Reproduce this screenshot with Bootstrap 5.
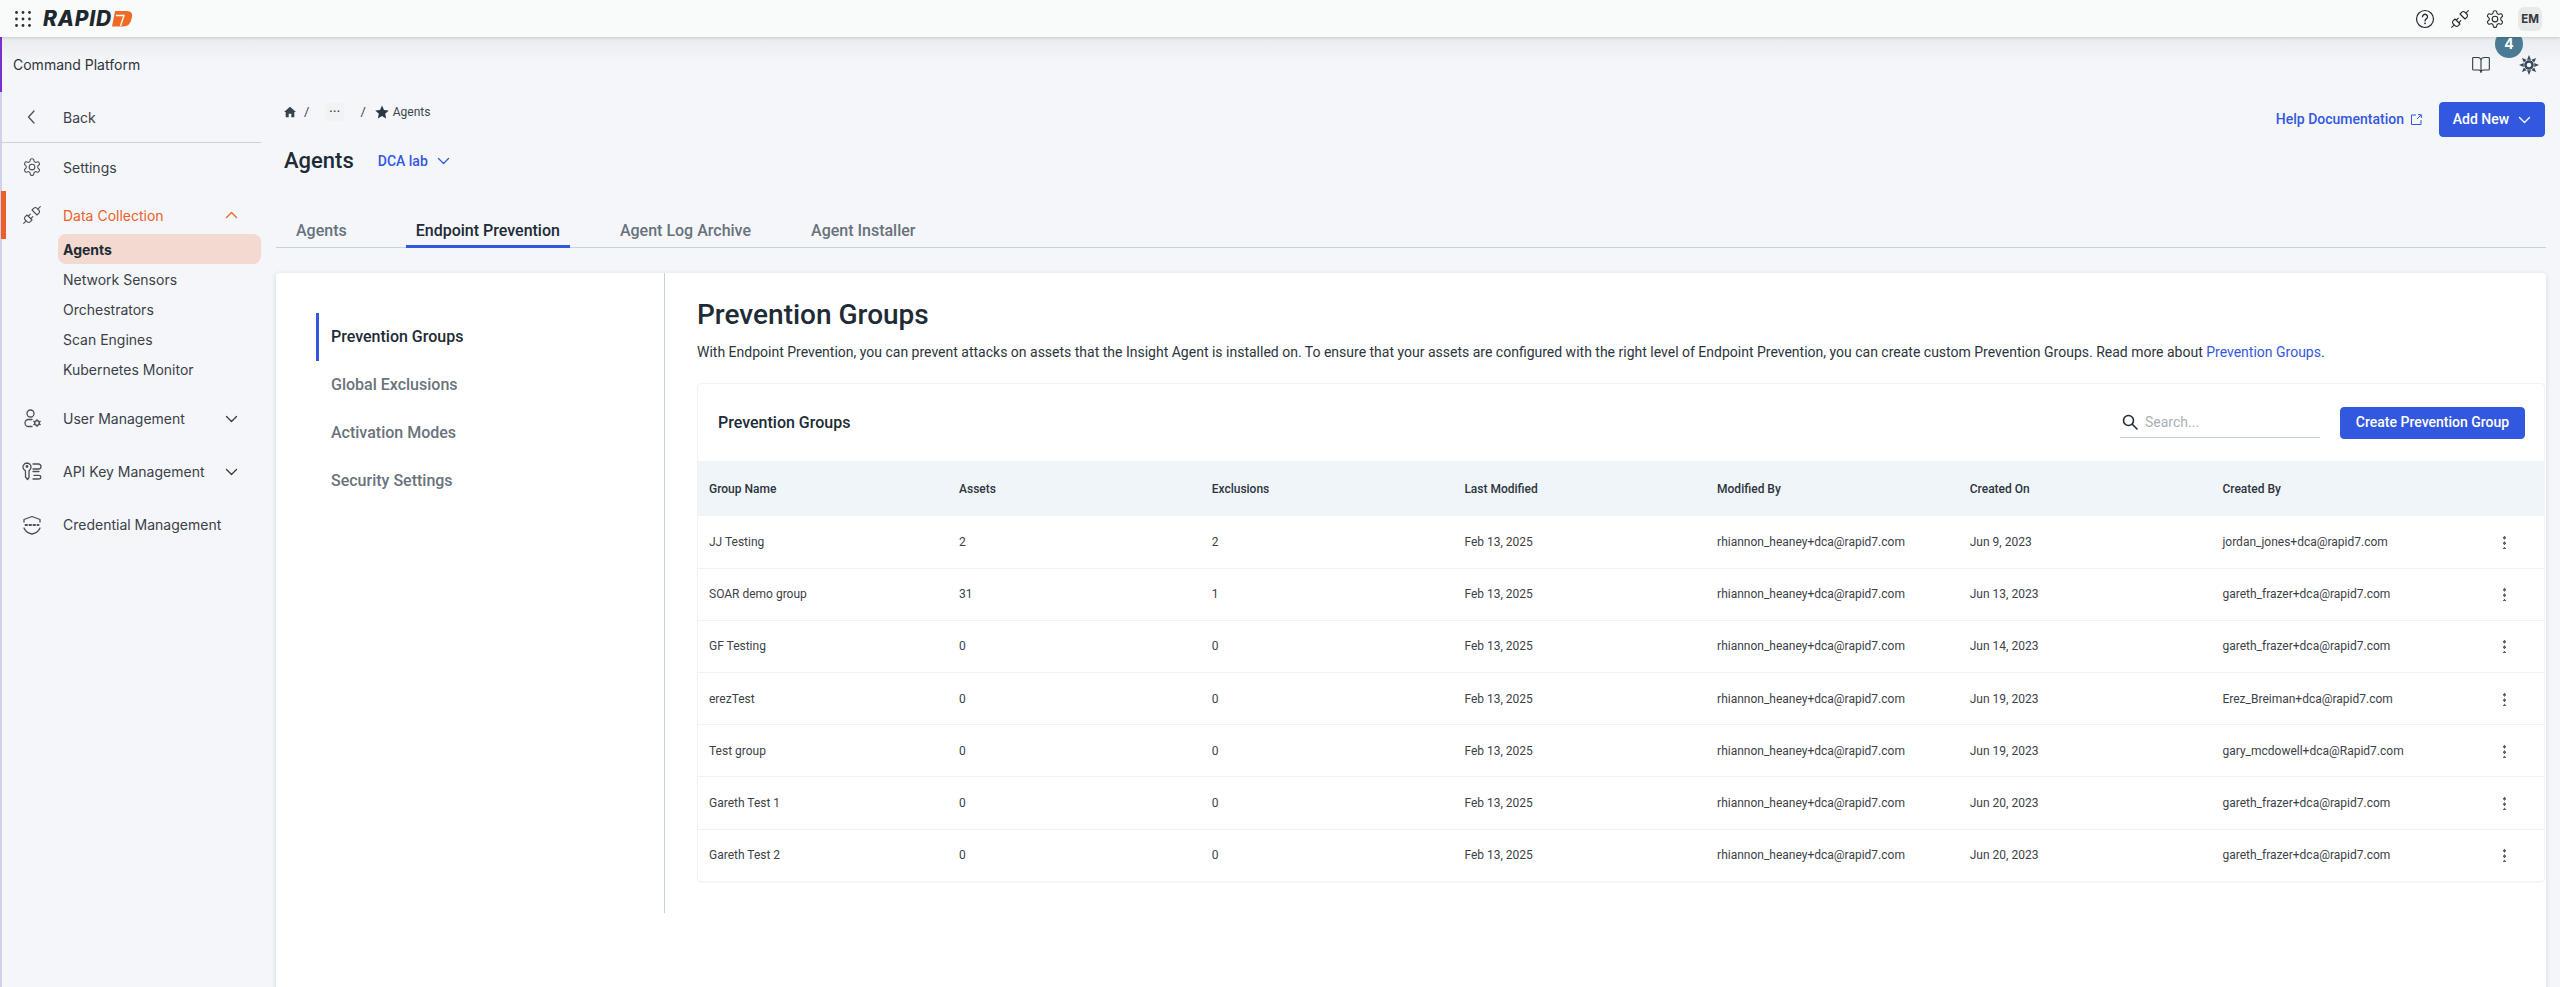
<!doctype html>
<html lang="en">
<head>
<meta charset="utf-8">
<title>Agents</title>
<link rel="stylesheet" href="https://cdn.jsdelivr.net/npm/bootstrap@5.3.0/dist/css/bootstrap.min.css">
<style>
html,body{height:987px;overflow:hidden}
body{background:#f4f6f9;font-family:Roboto,"Liberation Sans",sans-serif;color:#212b36;font-size:14px}
svg{display:block;flex:none}
.ico{fill:none;stroke:currentColor;stroke-width:1.3;stroke-linecap:round;stroke-linejoin:round}
.topstrip{height:37px;background:#f9fbfb;box-shadow:0 1px 3px rgba(0,0,0,.14);position:relative;z-index:2;padding:0 18px 0 15px}
.logo-word{font-family:Inter,"Liberation Sans",sans-serif;font-weight:800;font-style:italic;font-size:21px;letter-spacing:.8px;color:#20282f;line-height:1}
.avatar-box{width:24px;height:24px;border-radius:6px;background:#e8e9e9;font:700 11.5px Inter,sans-serif;color:#33393f}
.top-ico{width:20px;height:20px;color:#24292e}
.notice{width:28px;height:28px;border-radius:50%;background:#4a7a94;color:#fff;font:700 14px/28px Inter,sans-serif;position:absolute;left:-24px;top:-25px;text-align:center;z-index:1}
.platform-bar{height:55px;background:linear-gradient(#e9ecef,#f4f6f9 26px);border-left:2px solid #7b2fd0;padding:0 21px 0 11px;font:400 14px Inter,sans-serif;color:#2f353b}
.platform-actions{gap:28px;color:#2f3a44}
.shell{height:895px}
.leftnav{width:261px;flex:none;border-left:2px solid #cfd2e8;font:400 14px Inter,sans-serif;color:#3b4148}
.nav-row{display:flex;align-items:center;padding-left:20px;position:relative;color:#3b4148}
.nav-row>svg:first-child{width:20px;height:20px;color:#4a5058;margin-right:21px}
.row-back{height:51px;border-bottom:1px solid #cdd1d6}
.row-std{height:48px}
.row-tall{height:53px}
.row-on{color:#ef5e2a}
.row-on::before{content:"";position:absolute;left:-1px;top:0;bottom:0;width:5px;background:#ef5e2a}
.chev{position:absolute;left:223px;top:50%;margin-top:-6px;width:13px;height:12px;color:#33393f}
.row-on .chev{color:#ef5e2a}
.sub-list{margin:-5px 0 8px 56px}
.sub-item{height:30px;display:flex;align-items:center;padding-left:5px;color:#3b4148}
.sub-on{background:#f4d9d1;border-radius:8px;font-weight:700;color:#212b36}
.workspace{flex:1;min-width:0;padding:0 14px 0 15px}
.head-top{height:45px;padding-top:10px}
.crumbs{padding:0 0 0 8px;font-size:12px;color:#3b4650;height:20px}
.crumbs .sep{margin:0 16px 0 8px;font-size:13px}
.crumbs .more{width:19px;height:18px;background:#f1f2f3;text-align:center;line-height:18px;margin-right:16px;font-weight:700;font-size:11px;letter-spacing:.5px}
.help-link{color:#3358e0;font-weight:500;font-size:14px;text-decoration:none;gap:7px;margin-right:17px}
.btn-add{--bs-btn-bg:#3358e0;--bs-btn-border-color:#3358e0;--bs-btn-hover-bg:#3358e0;--bs-btn-hover-border-color:#3358e0;--bs-btn-font-size:14px;--bs-btn-font-weight:500;--bs-btn-border-radius:4px}
.btn-new{width:106px;height:35px;gap:9px;padding:0;margin-right:1px}
.btn-create{width:185px;height:32px;padding:0;white-space:nowrap}
.title-row{height:48px;padding-left:8px}
.title-row h1{font-size:22px;font-weight:500;margin:0;color:#212b36;line-height:1}
.org-pick{color:#3358e0;font-weight:500;font-size:14px;margin-left:24px;gap:9px}
.tab-strip{margin-top:25px;height:38px;border-bottom:1px solid #c3d2e1}
.tab-link{height:38px;padding:9px 20px 0;font-size:16px;font-weight:500;color:#68727c;border-bottom:3px solid transparent;margin-bottom:-1px}
.tab-link:hover{color:#68727c}
.tab-first{margin-right:39px}
.tab-on{padding:9px 10px 0;color:#212b36;border-bottom-color:#3358e0}
.tab-on:hover{color:#212b36}
.tab-next{margin-left:40px;padding:9px 10px 0}
.main-panel{margin-top:25px;height:720px;background:#fff;border-radius:4px 4px 0 0;box-shadow:0 1px 5px rgba(40,60,90,.16)}
.split{height:640px}
.side-menu{width:389px;flex:none;border-right:1px solid #c3d2e1;padding:40px 0 0 40px}
.side-link{display:block;height:48px;line-height:48px;padding-left:12px;font-size:16px;font-weight:500;color:#6a737c;border-left:3px solid transparent;text-decoration:none}
.side-on{color:#212b36;border-left-color:#3358e0}
.content-pane{flex:1;min-width:0;padding:23px 0 0 32px}
.content-pane h2{font-size:28px;font-weight:500;line-height:38px;margin:0 0 9px;color:#212b36}
.intro{font-size:14px;line-height:20px;margin:-1px 0 21px;color:#2c343c}
.intro a{color:#3358e0;text-decoration:none}
.table-box{border:1px solid #f2f3f5;border-radius:4px;box-shadow:0 1px 1px rgba(0,0,0,.03);margin-right:1px}
.tool-row{height:77px;padding:0 19px 0 20px}
.tool-row h3{font-size:16px;font-weight:500;margin:0;color:#212b36}
.search-box{width:200px;height:30px;border-bottom:1px solid #c3d2e1;padding-left:2px;gap:7px;margin-right:20px;color:#212b36}
.search-box input{border:0;outline:0;background:transparent;font-size:14px;width:150px;padding:0}
.search-box input::placeholder{color:#a9afb5}
.table-box .table{margin:0;table-layout:fixed;font-size:12px;--bs-table-color:#3c4248;--bs-table-border-color:#f1f2f4}
.table-box th{background:#f0f5f9;height:55px;font-weight:500;vertical-align:middle;padding:0 11px;color:#2c3640;border-bottom:0}
.table-box td{height:52.2px;vertical-align:middle;padding:0 11px;border-bottom:1px solid #f1f2f4}
.table-box tr:last-child td{border-bottom:0}
.kebab{width:3px;height:14px;background:radial-gradient(circle at center,#5a6168 1.5px,transparent 1.6px) 0 0/3px 5.5px repeat-y;margin-left:auto;margin-right:27px}
</style>
</head>
<body>
<svg width="0" height="0" style="position:absolute">
<defs>
<symbol id="i-gear" viewBox="0 0 24 24"><path d="M12.22 2h-.44a2 2 0 0 0-2 2v.18a2 2 0 0 1-1 1.73l-.43.25a2 2 0 0 1-2 0l-.15-.08a2 2 0 0 0-2.73.73l-.22.38a2 2 0 0 0 .73 2.73l.15.1a2 2 0 0 1 1 1.72v.51a2 2 0 0 1-1 1.74l-.15.09a2 2 0 0 0-.73 2.73l.22.38a2 2 0 0 0 2.73.73l.15-.08a2 2 0 0 1 2 0l.43.25a2 2 0 0 1 1 1.73V20a2 2 0 0 0 2 2h.44a2 2 0 0 0 2-2v-.18a2 2 0 0 1 1-1.73l.43-.25a2 2 0 0 1 2 0l.15.08a2 2 0 0 0 2.73-.73l.22-.39a2 2 0 0 0-.73-2.73l-.15-.08a2 2 0 0 1-1-1.74v-.5a2 2 0 0 1 1-1.74l.15-.09a2 2 0 0 0 .73-2.73l-.22-.38a2 2 0 0 0-2.73-.73l-.15.08a2 2 0 0 1-2 0l-.43-.25a2 2 0 0 1-1-1.73V4a2 2 0 0 0-2-2z"/><circle cx="12" cy="12" r="3.4"/></symbol>
<symbol id="i-plug" viewBox="0 0 24 24"><path d="m19 5 3-3M2 22l3-3M6.3 20.3a2.4 2.4 0 0 0 3.4 0L12 18l-6-6-2.3 2.3a2.4 2.4 0 0 0 0 3.4ZM7.5 13.5 10 11M10.5 16.5 13 14M12 6l6 6 2.3-2.3a2.4 2.4 0 0 0 0-3.4l-2.6-2.6a2.4 2.4 0 0 0-3.4 0Z"/></symbol>
<symbol id="i-down" viewBox="0 0 13 12"><path d="M1.5 3.5 6.5 8.5 11.5 3.5"/></symbol>
<symbol id="i-up" viewBox="0 0 13 12"><path d="M1.5 8.5 6.5 3.5 11.5 8.5"/></symbol>
</defs>
</svg>

<header class="topstrip d-flex align-items-center">
  <svg width="16" height="16" viewBox="0 0 16 16" fill="#2a3036" aria-hidden="true"><circle cx="1.5" cy="1.5" r="1.4"/><circle cx="8" cy="1.5" r="1.4"/><circle cx="14.5" cy="1.5" r="1.4"/><circle cx="1.5" cy="8" r="1.4"/><circle cx="8" cy="8" r="1.4"/><circle cx="14.5" cy="8" r="1.4"/><circle cx="1.5" cy="14.5" r="1.4"/><circle cx="8" cy="14.5" r="1.4"/><circle cx="14.5" cy="14.5" r="1.4"/></svg>
  <span class="logo-word ms-2 ps-1">RAPID</span>
  <svg width="21" height="16" viewBox="0 0 21 16" aria-hidden="true"><path fill="#ef6a22" d="M3 0H15Q21 0 20 6L19.500 8Q18 15.500 11 15.500H0Z"/><path fill="none" stroke="#f9fbfb" stroke-width="1.400" d="M4 4.500H12L8.500 15"/></svg>
  <div class="ms-auto d-flex align-items-center">
    <svg class="top-ico" viewBox="0 0 20 20" aria-hidden="true"><circle cx="10" cy="10" r="8.500" fill="none" stroke="currentColor" stroke-width="1.200"/><path d="M7.500 7.800a2.500 2.500 0 1 1 3.800 2.100c-.9.600-1.300 1-1.300 2" fill="none" stroke="currentColor" stroke-width="1.300" stroke-linecap="round"/><circle cx="10" cy="14.300" r=".9" fill="currentColor"/></svg>
    <svg class="top-ico ico" style="margin-left:15px" viewBox="0 0 24 24" aria-hidden="true"><use href="#i-plug"/></svg>
    <svg class="top-ico ico" style="margin-left:15px" viewBox="0 0 24 24" aria-hidden="true"><use href="#i-gear"/></svg>
    <div class="avatar-box d-flex align-items-center justify-content-center" style="margin-left:13px">EM</div>
  </div>
</header>

<div class="platform-bar d-flex align-items-center justify-content-between">
  <span>Command Platform</span>
  <div class="d-flex align-items-center platform-actions">
    <svg width="20" height="20" class="ico" viewBox="0 0 24 24" aria-hidden="true"><path d="M12 7v14M3 18a1 1 0 0 1-1-1V4a1 1 0 0 1 1-1h5a4 4 0 0 1 4 4 4 4 0 0 1 4-4h5a1 1 0 0 1 1 1v13a1 1 0 0 1-1 1h-6a3 3 0 0 0-3 3 3 3 0 0 0-3-3z"/></svg>
    <div class="position-relative">
      <div class="notice">4</div>
      <svg width="20" height="20" viewBox="0 0 20 20" fill="#37495a" aria-hidden="true"><path d="M10 0l2 4.700H8zM10 20l2-4.700H8zM0 10l4.700-2v4zM20 10l-4.700-2v4zM2.900 2.900l4.700 1.900-2.800 2.800zM17.100 2.900l-4.700 1.900 2.800 2.800zM2.900 17.100l4.700-1.900-2.800-2.800zM17.100 17.100l-4.700-1.900 2.800-2.800z"/><circle cx="10" cy="10" r="4.800"/><circle cx="10" cy="10" r="2.300" fill="#f4f6f9"/></svg>
    </div>
  </div>
</div>

<div class="shell d-flex">
  <nav class="leftnav">
    <div class="nav-row row-back"><svg class="ico" viewBox="0 0 20 20" aria-hidden="true"><path d="M12 4 6.500 10 12 16"/></svg>Back</div>
    <div class="nav-row row-std"><svg class="ico" viewBox="0 0 24 24" aria-hidden="true"><use href="#i-gear"/></svg>Settings</div>
    <div class="nav-row row-std row-on"><svg class="ico" viewBox="0 0 24 24" aria-hidden="true"><use href="#i-plug"/></svg>Data Collection<svg class="chev ico" viewBox="0 0 13 12" aria-hidden="true"><use href="#i-up"/></svg></div>
    <div class="sub-list">
      <div class="sub-item sub-on">Agents</div>
      <div class="sub-item">Network Sensors</div>
      <div class="sub-item">Orchestrators</div>
      <div class="sub-item">Scan Engines</div>
      <div class="sub-item">Kubernetes Monitor</div>
    </div>
    <div class="nav-row row-tall"><svg class="ico" viewBox="0 0 20 20" aria-hidden="true"><circle cx="8.500" cy="4.500" r="3.500"/><path d="M10 10.500H6.500a3.500 3.500 0 0 0 0 7H10"/><circle cx="15" cy="14" r="2.300"/><path d="M15 10.600v1.100M15 16.300v1.100M11.800 12.400l1 .6M17.200 15l1 .6M11.800 15.600l1-.6M17.200 13l1-.6"/></svg>User Management<svg class="chev ico" viewBox="0 0 13 12" aria-hidden="true"><use href="#i-down"/></svg></div>
    <div class="nav-row row-tall"><svg class="ico" viewBox="0 0 20 20" aria-hidden="true"><path d="M5 1a4 4 0 0 0-3 6.600L3.500 9v6l2 2.500 1.500-2V9l1-1.400A4 4 0 0 0 5 1z"/><circle cx="5" cy="4.500" r=".8"/><path d="M11 2h5.500a1.800 1.800 0 0 1 0 5H11M11 9.500h6M11 17h6a1.800 1.800 0 0 0 0-3.600h-5"/></svg>API Key Management<svg class="chev ico" viewBox="0 0 13 12" aria-hidden="true"><use href="#i-down"/></svg></div>
    <div class="nav-row row-tall"><svg class="ico" viewBox="0 0 20 20" aria-hidden="true"><path d="M2 7V4.500L10 1.500l8 3V7M2 13c1 3 4 5 8 6 4-1 7-3 8-6"/><path stroke-width="2" stroke-dasharray="1.500 2.500" d="M3.500 10h13"/></svg>Credential Management</div>
  </nav>

  <main class="workspace">
    <div class="head-top d-flex justify-content-between">
      <div class="crumbs d-flex align-items-center">
        <svg width="12" height="12" viewBox="0 0 12 12" fill="#36434f" aria-hidden="true"><path d="M6 .8 0 6h1.700v5.200h3V7.700h2.600v3.500h3V6H12z"/></svg>
        <span class="sep">/</span>
        <span class="more">···</span>
        <span class="sep" style="margin-left:0;margin-right:9px">/</span>
        <svg width="14" height="14" viewBox="0 0 14 14" fill="#2a3641" class="me-1" aria-hidden="true"><path d="m7 .6 2 4.300 4.700.6-3.500 3.200.9 4.700L7 11.100l-4.100 2.300.9-4.700L.3 5.500 5 4.900z"/></svg>
        <span>Agents</span>
      </div>
      <div class="d-flex align-items-center align-self-start">
        <a class="help-link d-flex align-items-center" href="#">Help Documentation
          <svg width="11" height="11" viewBox="0 0 11 11" fill="none" stroke="currentColor" aria-hidden="true"><path d="M5 1H.5v9.500H10V6M6 5l4-4M7 .7h3.300V4"/></svg></a>
        <button class="btn btn-primary btn-add btn-new d-flex align-items-center justify-content-center" type="button">Add New
          <svg class="ico" width="13" height="12" viewBox="0 0 13 12" aria-hidden="true"><use href="#i-down"/></svg></button>
      </div>
    </div>
    <div class="title-row d-flex align-items-center">
      <h1>Agents</h1>
      <div class="org-pick d-flex align-items-center">DCA lab
        <svg class="ico" width="13" height="12" viewBox="0 0 13 12" aria-hidden="true"><use href="#i-down"/></svg></div>
    </div>
    <div class="nav tab-strip">
      <a class="nav-link tab-link tab-first" href="#">Agents</a>
      <a class="nav-link tab-link tab-on" href="#">Endpoint Prevention</a>
      <a class="nav-link tab-link tab-next" href="#">Agent Log Archive</a>
      <a class="nav-link tab-link tab-next" href="#">Agent Installer</a>
    </div>

    <section class="main-panel">
      <div class="split d-flex">
        <div class="side-menu">
          <a class="side-link side-on" href="#">Prevention Groups</a>
          <a class="side-link" href="#">Global Exclusions</a>
          <a class="side-link" href="#">Activation Modes</a>
          <a class="side-link" href="#">Security Settings</a>
        </div>
        <div class="content-pane">
          <h2>Prevention Groups</h2>
          <p class="intro">With Endpoint Prevention, you can prevent attacks on assets that the Insight Agent is installed on. To ensure that your assets are configured with the right level of Endpoint Prevention, you can create custom Prevention Groups. Read more about <a href="#">Prevention Groups</a>.</p>
          <div class="table-box">
            <div class="tool-row d-flex align-items-center">
              <h3>Prevention Groups</h3>
              <div class="search-box d-flex align-items-center ms-auto">
                <svg width="16" height="16" viewBox="0 0 16 16" fill="none" stroke="currentColor" stroke-width="1.600" stroke-linecap="round" aria-hidden="true"><circle cx="6.500" cy="6.500" r="5"/><path d="m10.500 10.500 4.500 4.500"/></svg>
                <input type="text" placeholder="Search..." aria-label="Search">
              </div>
              <button class="btn btn-primary btn-add btn-create" type="button">Create Prevention Group</button>
            </div>
            <table class="table">
              <colgroup><col style="width:250px"><col style="width:252.7px"><col style="width:252.7px"><col style="width:252.7px"><col style="width:252.7px"><col style="width:252.7px"><col style="width:252.7px"><col></colgroup>
              <thead><tr><th>Group Name</th><th>Assets</th><th>Exclusions</th><th>Last Modified</th><th>Modified By</th><th>Created On</th><th>Created By</th><th></th></tr></thead>
              <tbody>
                <tr><td>JJ Testing</td><td>2</td><td>2</td><td>Feb 13, 2025</td><td>rhiannon_heaney+dca@rapid7.com</td><td>Jun 9, 2023</td><td>jordan_jones+dca@rapid7.com</td><td><div class="kebab"></div></td></tr>
                <tr><td>SOAR demo group</td><td>31</td><td>1</td><td>Feb 13, 2025</td><td>rhiannon_heaney+dca@rapid7.com</td><td>Jun 13, 2023</td><td>gareth_frazer+dca@rapid7.com</td><td><div class="kebab"></div></td></tr>
                <tr><td>GF Testing</td><td>0</td><td>0</td><td>Feb 13, 2025</td><td>rhiannon_heaney+dca@rapid7.com</td><td>Jun 14, 2023</td><td>gareth_frazer+dca@rapid7.com</td><td><div class="kebab"></div></td></tr>
                <tr><td>erezTest</td><td>0</td><td>0</td><td>Feb 13, 2025</td><td>rhiannon_heaney+dca@rapid7.com</td><td>Jun 19, 2023</td><td>Erez_Breiman+dca@rapid7.com</td><td><div class="kebab"></div></td></tr>
                <tr><td>Test group</td><td>0</td><td>0</td><td>Feb 13, 2025</td><td>rhiannon_heaney+dca@rapid7.com</td><td>Jun 19, 2023</td><td>gary_mcdowell+dca@Rapid7.com</td><td><div class="kebab"></div></td></tr>
                <tr><td>Gareth Test 1</td><td>0</td><td>0</td><td>Feb 13, 2025</td><td>rhiannon_heaney+dca@rapid7.com</td><td>Jun 20, 2023</td><td>gareth_frazer+dca@rapid7.com</td><td><div class="kebab"></div></td></tr>
                <tr><td>Gareth Test 2</td><td>0</td><td>0</td><td>Feb 13, 2025</td><td>rhiannon_heaney+dca@rapid7.com</td><td>Jun 20, 2023</td><td>gareth_frazer+dca@rapid7.com</td><td><div class="kebab"></div></td></tr>
              </tbody>
            </table>
          </div>
        </div>
      </div>
    </section>
  </main>
</div>
<script src="https://cdn.jsdelivr.net/npm/bootstrap@5.3.0/dist/js/bootstrap.bundle.min.js"></script>
</body>
</html>
